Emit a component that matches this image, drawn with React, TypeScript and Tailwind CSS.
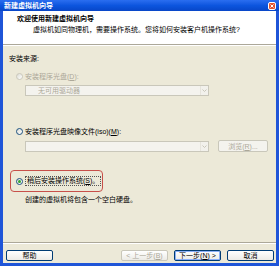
import React from "react";

function Radio({ checked, disabled }: { checked?: boolean; disabled?: boolean }) {
  return (
    <span
      className={
        "flex h-[7px] w-[7px] shrink-0 items-center justify-center rounded-full border bg-gradient-to-br from-[#dcdcd4] to-white " +
        (disabled ? "border-[#cac8bb]" : "border-[#1c5180]")
      }
    >
      {checked && <span className="h-[3px] w-[3px] rounded-full bg-[#2fa42f]" />}
    </span>
  );
}

function Combo({ text }: { text?: string }) {
  return (
    <div className="flex h-[11px] w-[184px] items-center border border-[#c9c7ba] bg-[#f4f3ee]">
      <span className="flex-1 pl-[12px] text-[#aca899]">{text}</span>
      <span className="flex h-[9px] w-[8px] items-center justify-center border-l border-[#e6e4dc] bg-[#f2f1ec]">
        <svg width="5" height="3" viewBox="0 0 5 3">
          <path d="M0.5 0.5 L2.5 2.5 L4.5 0.5" stroke="#c9c7ba" strokeWidth="1" fill="none" />
        </svg>
      </span>
    </div>
  );
}

function Btn({
  children,
  disabled,
  def,
}: {
  children: React.ReactNode;
  disabled?: boolean;
  def?: boolean;
}) {
  return (
    <div
      className={
        "flex h-[11px] w-[47px] items-center justify-center rounded-[2px] border bg-gradient-to-b from-white to-[#ecebe6] " +
        (disabled
          ? "border-[#c9c7ba] text-[#aca899]"
          : def
          ? "border-[#003c74] text-black shadow-[inset_0_0_0_1px_#8cb0f8]"
          : "border-[#003c74] text-black")
      }
    >
      {children}
    </div>
  );
}

export default function App() {
  return (
    <div className="flex h-[266px] w-[279px] flex-col bg-[#1f55d8] font-['Liberation_Sans','Noto_Sans_CJK_SC',sans-serif] text-[7px] leading-[9px] text-black">
      {/* title bar */}
      <div className="flex h-[11px] items-center bg-gradient-to-b from-[#2a6ef0] via-[#0c55de] to-[#0846c8] pl-[4px] pr-[3px]">
        <span className="flex-1 font-bold text-white">新建虚拟机向导</span>
        <span className="flex h-[8px] w-[8px] items-center justify-center rounded-[2px] border border-white bg-[#e0532f]">
          <svg width="4" height="4" viewBox="0 0 4 4">
            <path d="M0.5 0.5 L3.5 3.5 M3.5 0.5 L0.5 3.5" stroke="white" strokeWidth="1" />
          </svg>
        </span>
      </div>
      <div className="mx-[3px] mb-[3px] flex flex-1 flex-col bg-[#ece9d8]">
        {/* header */}
        <div className="h-[34px] border-b border-[#aca899] bg-white pl-[14px] pt-[2.5px]">
          <div className="font-bold">欢迎使用新建虚拟机向导</div>
          <div className="mt-[2px] pl-[16px]">虚拟机如同物理机，需要操作系统。您将如何安装客户机操作系统?</div>
        </div>
        {/* body */}
        <div className="flex flex-1 flex-col border-t border-white pl-[6px] pt-[8px]">
          <div>安装来源:</div>
          <div className="mt-[9px] flex items-center gap-[2px] pl-[7px] text-[#aca899]">
            <Radio disabled />
            <span>
              安装程序光盘(<span className="underline">D</span>):
            </span>
          </div>
          <div className="ml-[16px] mt-[4px]">
            <Combo text="无可用驱动器" />
          </div>
          <div className="mt-[31px] flex items-center gap-[2px] pl-[7px]">
            <Radio />
            <span>
              安装程序光盘映像文件(iso)(<span className="underline">M</span>):
            </span>
          </div>
          <div className="ml-[16px] mt-[4px] flex items-center gap-[9px]">
            <Combo />
            <div className="flex h-[12px] w-[50px] items-center justify-center rounded-[2px] border border-[#c9c7ba] bg-[#f4f3ee] text-[#aca899]">
              浏览(<span className="underline">R</span>)...
            </div>
          </div>
          <div className="ml-[1px] mt-[18px] flex h-[22px] w-[93px] items-center rounded-[4px] border-[1.5px] border-[#c8504a] pl-[5px]">
            <div className="flex items-center gap-[2px]">
              <Radio checked />
              <span className="border border-dotted border-[#555] px-[1px] leading-[8px]">
                稍后安装操作系统(<span className="underline">S</span>)。
              </span>
            </div>
          </div>
          <div className="ml-[16px] mt-[3px]">创建的虚拟机将包含一个空白硬盘。</div>
        </div>
        {/* footer */}
        <div className="h-[21px] border-t border-[#aca899]">
          <div className="flex h-full items-start border-t border-white pl-[3px] pr-[2px] pt-[6px]">
            <Btn>帮助</Btn>
            <div className="flex-1" />
            <Btn disabled>
              &lt; 上一步(<span className="underline">B</span>)
            </Btn>
            <div className="w-[6px]" />
            <Btn def>
              下一步(<span className="underline">N</span>) &gt;
            </Btn>
            <div className="w-[6px]" />
            <Btn>取消</Btn>
          </div>
        </div>
      </div>
    </div>
  );
}
